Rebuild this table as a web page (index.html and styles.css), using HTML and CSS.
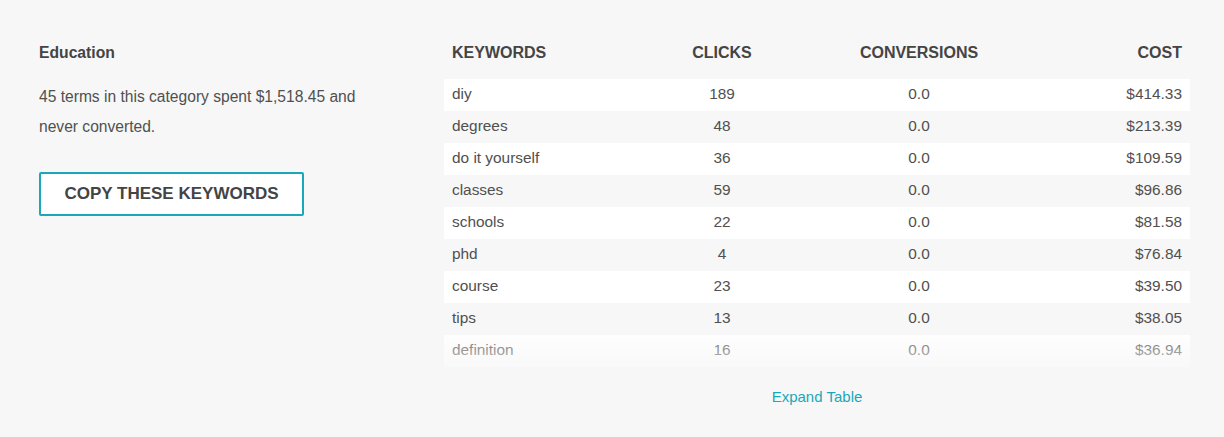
FILE: index.html
```html
<!DOCTYPE html>
<html>
<head>
<meta charset="utf-8">
<link rel="stylesheet" href="styles.css">
</head>
<body>
<div class="page">
  <div class="summary">
    <h2 class="title">Education</h2>
    <p class="desc">45 terms in this category spent $1,518.45 and never converted.</p>
    <button class="copy-btn">COPY THESE KEYWORDS</button>
  </div>
  <div class="table-wrap">
    <div class="table">
      <div class="row head">
        <div class="c kw">KEYWORDS</div>
        <div class="c ctr">CLICKS</div>
        <div class="c ctr">CONVERSIONS</div>
        <div class="c rt">COST</div>
      </div>
      <div class="body">
        <div class="row"><div class="c kw">diy</div><div class="c ctr">189</div><div class="c ctr">0.0</div><div class="c rt">$414.33</div></div>
        <div class="row"><div class="c kw">degrees</div><div class="c ctr">48</div><div class="c ctr">0.0</div><div class="c rt">$213.39</div></div>
        <div class="row"><div class="c kw">do it yourself</div><div class="c ctr">36</div><div class="c ctr">0.0</div><div class="c rt">$109.59</div></div>
        <div class="row"><div class="c kw">classes</div><div class="c ctr">59</div><div class="c ctr">0.0</div><div class="c rt">$96.86</div></div>
        <div class="row"><div class="c kw">schools</div><div class="c ctr">22</div><div class="c ctr">0.0</div><div class="c rt">$81.58</div></div>
        <div class="row"><div class="c kw">phd</div><div class="c ctr">4</div><div class="c ctr">0.0</div><div class="c rt">$76.84</div></div>
        <div class="row"><div class="c kw">course</div><div class="c ctr">23</div><div class="c ctr">0.0</div><div class="c rt">$39.50</div></div>
        <div class="row"><div class="c kw">tips</div><div class="c ctr">13</div><div class="c ctr">0.0</div><div class="c rt">$38.05</div></div>
        <div class="row"><div class="c kw">definition</div><div class="c ctr">16</div><div class="c ctr">0.0</div><div class="c rt">$36.94</div></div>
        <div class="fade"></div>
      </div>
    </div>
    <a class="expand" href="#">Expand Table</a>
  </div>
</div>
</body>
</html>
```
FILE: styles.css
```css
html, body {
  margin: 0;
  padding: 0;
  background: #f7f7f7;
}
body {
  font-family: "Liberation Sans", Arial, sans-serif;
  color: #505050;
}
.page {
  display: grid;
  grid-template-columns: 405px 746px;
  padding: 36px 0 0 39px;
}
.title {
  font-weight: 700;
  font-size: 15.7px;
  line-height: 32px;
  margin: 0;
  padding-top: 1px;
  color: #444;
}
.desc {
  font-size: 15.6px;
  line-height: 30px;
  margin: 13px 0 0;
  width: 340px;
  color: #505050;
}
.copy-btn {
  margin-top: 30px;
  width: 265px;
  height: 44px;
  background: #fff;
  border: 2px solid #17a8bb;
  border-radius: 2px;
  font-family: "Liberation Sans", Arial, sans-serif;
  font-weight: 700;
  font-size: 17px;
  color: #444;
  padding: 0;
}
.row {
  display: grid;
  grid-template-columns: 196px 164px 230px 156px;
  height: 32px;
  line-height: 30px;
  align-items: start;
  font-size: 15.4px;
}
.c { padding: 0 8px; }
.kw { text-align: left; }
.ctr { text-align: center; }
.rt { text-align: right; }
.head {
  font-weight: 700;
  font-size: 16px;
  color: #444;
  height: 30px;
  padding-top: 2px;
  margin-bottom: 11px;
}
.body {
  position: relative;
}
.body .row:nth-child(odd) { background: #fff; }
.body .row:nth-child(even) { background: #f7f7f7; }
.fade {
  position: absolute;
  left: 0;
  right: 0;
  bottom: 0;
  height: 32px;
  background: linear-gradient(rgba(247,247,247,0.15), rgba(247,247,247,0.75));
}
.expand {
  display: block;
  text-align: center;
  margin-top: 21px;
  font-size: 15px;
  color: #17a8bb;
  text-decoration: none;
  line-height: 18px;
}
```
